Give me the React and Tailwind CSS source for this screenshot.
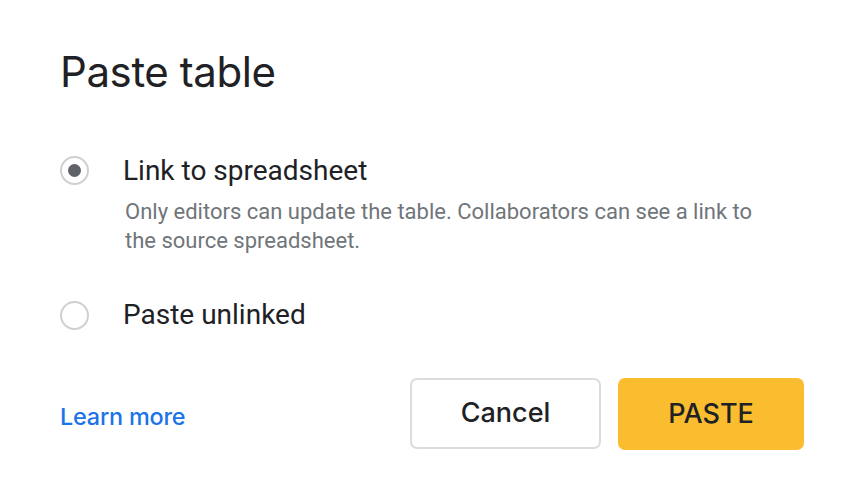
export default function App() {
  return (
    <div className="w-[856px] h-[492px] bg-white relative overflow-hidden" style={{ fontFamily: "Roboto, 'Liberation Sans', sans-serif" }}>
      <div className="pl-[60px] pt-[47px]">
        <h1 className="text-[42px] leading-[50px] text-[#202124] font-normal" style={{ fontFamily: "Inter, 'Liberation Sans', sans-serif", letterSpacing: "-0.4px" }}>Paste table</h1>
        <div className="mt-[58px] flex gap-[34px]">
          <div className="mt-[1px] w-[29px] h-[29px] rounded-full border-2 border-[#d0d0d0] flex items-center justify-center shrink-0">
            <div className="w-[13px] h-[13px] rounded-full bg-[#5f6368]" />
          </div>
          <div>
            <div className="text-[28px] leading-[32px] text-[#202124]">Link to spreadsheet</div>
            <div className="mt-[10px] text-[22px] leading-[29px] text-[#70757a] w-[645px] pl-[2px]">
              Only editors can update the table. Collaborators can see a link to the source spreadsheet.
            </div>
          </div>
        </div>
        <div className="mt-[44px] flex gap-[34px] items-center">
          <div className="w-[29px] h-[29px] rounded-full border-2 border-[#d0d0d0] shrink-0" />
          <div className="text-[28px] leading-[32px] text-[#202124]">Paste unlinked</div>
        </div>
      </div>
      <div className="absolute left-[60px] top-[378px] right-[52px] flex items-center">
        <a className="text-[23.4px] font-medium text-[#1a73e8] mt-[6px]" style={{ fontFamily: "Inter, 'Liberation Sans', sans-serif", letterSpacing: "-0.2px" }}>Learn more</a>
        <div className="ml-auto flex gap-[17px]">
          <button className="w-[191px] h-[71px] rounded-[7px] border-2 border-[#dadce0] bg-white text-[27px] font-medium text-[#202124]" style={{ fontFamily: "Inter, 'Liberation Sans', sans-serif" }}>Cancel</button>
          <button className="w-[186px] h-[72px] rounded-[7px] bg-[#fbbd30] text-[27px] font-medium text-[#202124]" style={{ fontFamily: "Inter, 'Liberation Sans', sans-serif" }}>PASTE</button>
        </div>
      </div>
    </div>
  );
}
